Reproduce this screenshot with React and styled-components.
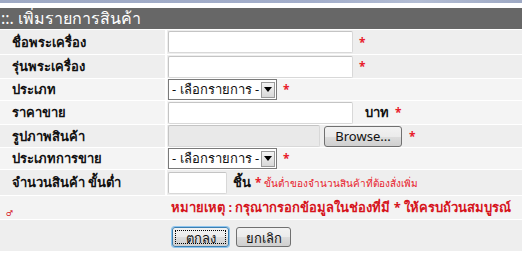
import styled, { createGlobalStyle } from 'styled-components';

const GlobalStyle = createGlobalStyle`
  html, body { margin: 0; padding: 0; background: #ffffff; }
  body { font-family: Tahoma, "Noto Sans", "DejaVu Sans", sans-serif; font-size: 13px; }
`;

const TopBand = styled.div`
  height: 3px;
  background: linear-gradient(90deg, #9ea9c4, #a3aecb 60%, #b3bdd4 80%, #9ea9c4);
  margin-bottom: 5px;
`;

const Form = styled.div`
  display: flex;
  flex-direction: column;
  gap: 1px;
  background: #ffffff;
`;

const Header = styled.div`
  height: 21px;
  background: #676767;
  color: #ffffff;
  font-size: 16px;
  line-height: 21px;
  padding-left: 1px;
`;

const Row = styled.div`
  display: grid;
  grid-template-columns: 165px 1fr;
  column-gap: 2px;
  height: ${(p) => p.h || 23}px;
`;

const Label = styled.div`
  background: ${(p) => p.bg || '#eeeeee'};
  font-weight: bold;
  color: #111;
  display: flex;
  align-items: center;
  padding-left: 12px;
`;

const Cell = styled.div`
  background: ${(p) => p.bg || '#eeeeee'};
  display: flex;
  align-items: center;
  gap: ${(p) => p.gap || 6}px;
  padding-left: 1px;
`;

const TextInput = styled.input`
  box-sizing: border-box;
  width: ${(p) => p.w}px;
  height: 22px;
  border: 1px solid #d8d8d8;
  border-top-color: #c4c4c4;
  border-left-color: #c4c4c4;
  background: ${(p) => (p.disabled ? '#e9e9e9' : '#ffffff')};
  border-radius: 2px;
  margin: 0;
`;

const Req = styled.span`
  color: #e8202a;
  font-size: 12px;
  font-weight: bold;
`;

const Unit = styled.span`
  font-weight: bold;
  color: #111;
  margin-left: ${(p) => p.ml ?? 6}px;
`;

const SelectBox = styled.div`
  box-sizing: border-box;
  width: 109px;
  height: 21px;
  border: 1px solid #7a7a7a;
  background: #fff;
  display: flex;
  align-items: center;
  font-size: 13px;
  color: #111;
  padding-left: 3px;
  justify-content: space-between;
`;

const Arrow = styled.span`
  width: 14px;
  height: 16px;
  margin-right: 1px;
  border: 1px solid #9a9a9a;
  box-sizing: border-box;
  background: linear-gradient(#f4f4f4, #d8d8d8);
  display: flex;
  align-items: center;
  justify-content: center;
`;

const Button = styled.button`
  font-family: Tahoma, "Noto Sans", "DejaVu Sans", sans-serif;
  font-size: 13px;
  height: ${(p) => p.h || 21}px;
  width: ${(p) => p.w}px;
  padding: 0;
  border: 1px solid ${(p) => (p.focus ? '#3c7fb1' : '#707070')};
  border-radius: 3px;
  background: linear-gradient(#f2f2f2 0%, #ebebeb 50%, #dddddd 51%, #cfcfcf 100%);
  color: #111;
  outline: ${(p) => (p.focus ? '1px dotted #000' : 'none')};
  outline-offset: -4px;
  box-shadow: ${(p) => (p.focus ? '0 0 0 1px #8ec5ef' : 'none')};
`;

const Hint = styled.span`
  color: #e8202a;
  font-size: 10px;
  margin-left: -2px;
`;

const NoteRow = styled.div`
  position: relative;
  height: 23px;
  background: #f3f3f3;
  color: #d6141c;
  font-weight: bold;
  display: flex;
  align-items: center;
  padding-left: 171px;
`;

const Mark = styled.span`
  position: absolute;
  left: 6px;
  bottom: 1px;
  font-size: 8px;
  font-weight: normal;
  color: #d6141c;
`;

const Actions = styled.div`
  height: 31px;
  background: #eeeeee;
  display: flex;
  align-items: center;
  gap: 7px;
  padding-left: 172px;
  padding-top: 3px;
  box-sizing: border-box;
`;

const Select = () => (
  <SelectBox>
    - เลือกรายการ -
    <Arrow>
      <svg width="8" height="5" viewBox="0 0 8 5">
        <path d="M0 0 H8 L4 5 Z" fill="#000" />
      </svg>
    </Arrow>
  </SelectBox>
);

const App = () => (
  <>
    <GlobalStyle />
    <TopBand />
    <Form>
      <Header>::. เพิ่มรายการสินค้า</Header>
      <Row h={24}>
        <Label>ชื่อพระเครื่อง</Label>
        <Cell>
          <TextInput w={185} />
          <Req>*</Req>
        </Cell>
      </Row>
      <Row h={23}>
        <Label>รุ่นพระเครื่อง</Label>
        <Cell>
          <TextInput w={185} />
          <Req>*</Req>
        </Cell>
      </Row>
      <Row h={21}>
        <Label bg="#f4f4f4">ประเภท</Label>
        <Cell bg="#f4f4f4">
          <Select />
          <Req>*</Req>
        </Cell>
      </Row>
      <Row h={23}>
        <Label bg="#f4f4f4">ราคาขาย</Label>
        <Cell bg="#f4f4f4">
          <TextInput w={185} />
          <Unit>บาท</Unit>
          <Req>*</Req>
        </Cell>
      </Row>
      <Row h={22}>
        <Label>รูปภาพสินค้า</Label>
        <Cell gap={4}>
          <TextInput w={152} disabled />
          <Button w={78}>Browse...</Button>
          <Req>&nbsp;*</Req>
        </Cell>
      </Row>
      <Row h={21}>
        <Label bg="#f4f4f4">ประเภทการขาย</Label>
        <Cell bg="#f4f4f4">
          <Select />
          <Req>*</Req>
        </Cell>
      </Row>
      <Row h={25}>
        <Label>จำนวนสินค้า ขั้นต่ำ</Label>
        <Cell>
          <TextInput w={59} />
          <Unit ml={0}>ชิ้น</Unit>
          <Hint>
            <Req>*</Req> ขั้นต่ำของจำนวนสินค้าที่ต้องสั่งเพิ่ม
          </Hint>
        </Cell>
      </Row>
      <NoteRow>
        หมายเหตุ : กรุณากรอกข้อมูลในช่องที่มี * ให้ครบถ้วนสมบูรณ์
        <Mark>♂</Mark>
      </NoteRow>
      <Actions>
        <Button focus w={57} h={20}>ตกลง</Button>
        <Button w={55} h={20}>ยกเลิก</Button>
      </Actions>
    </Form>
  </>
);

export default App;
